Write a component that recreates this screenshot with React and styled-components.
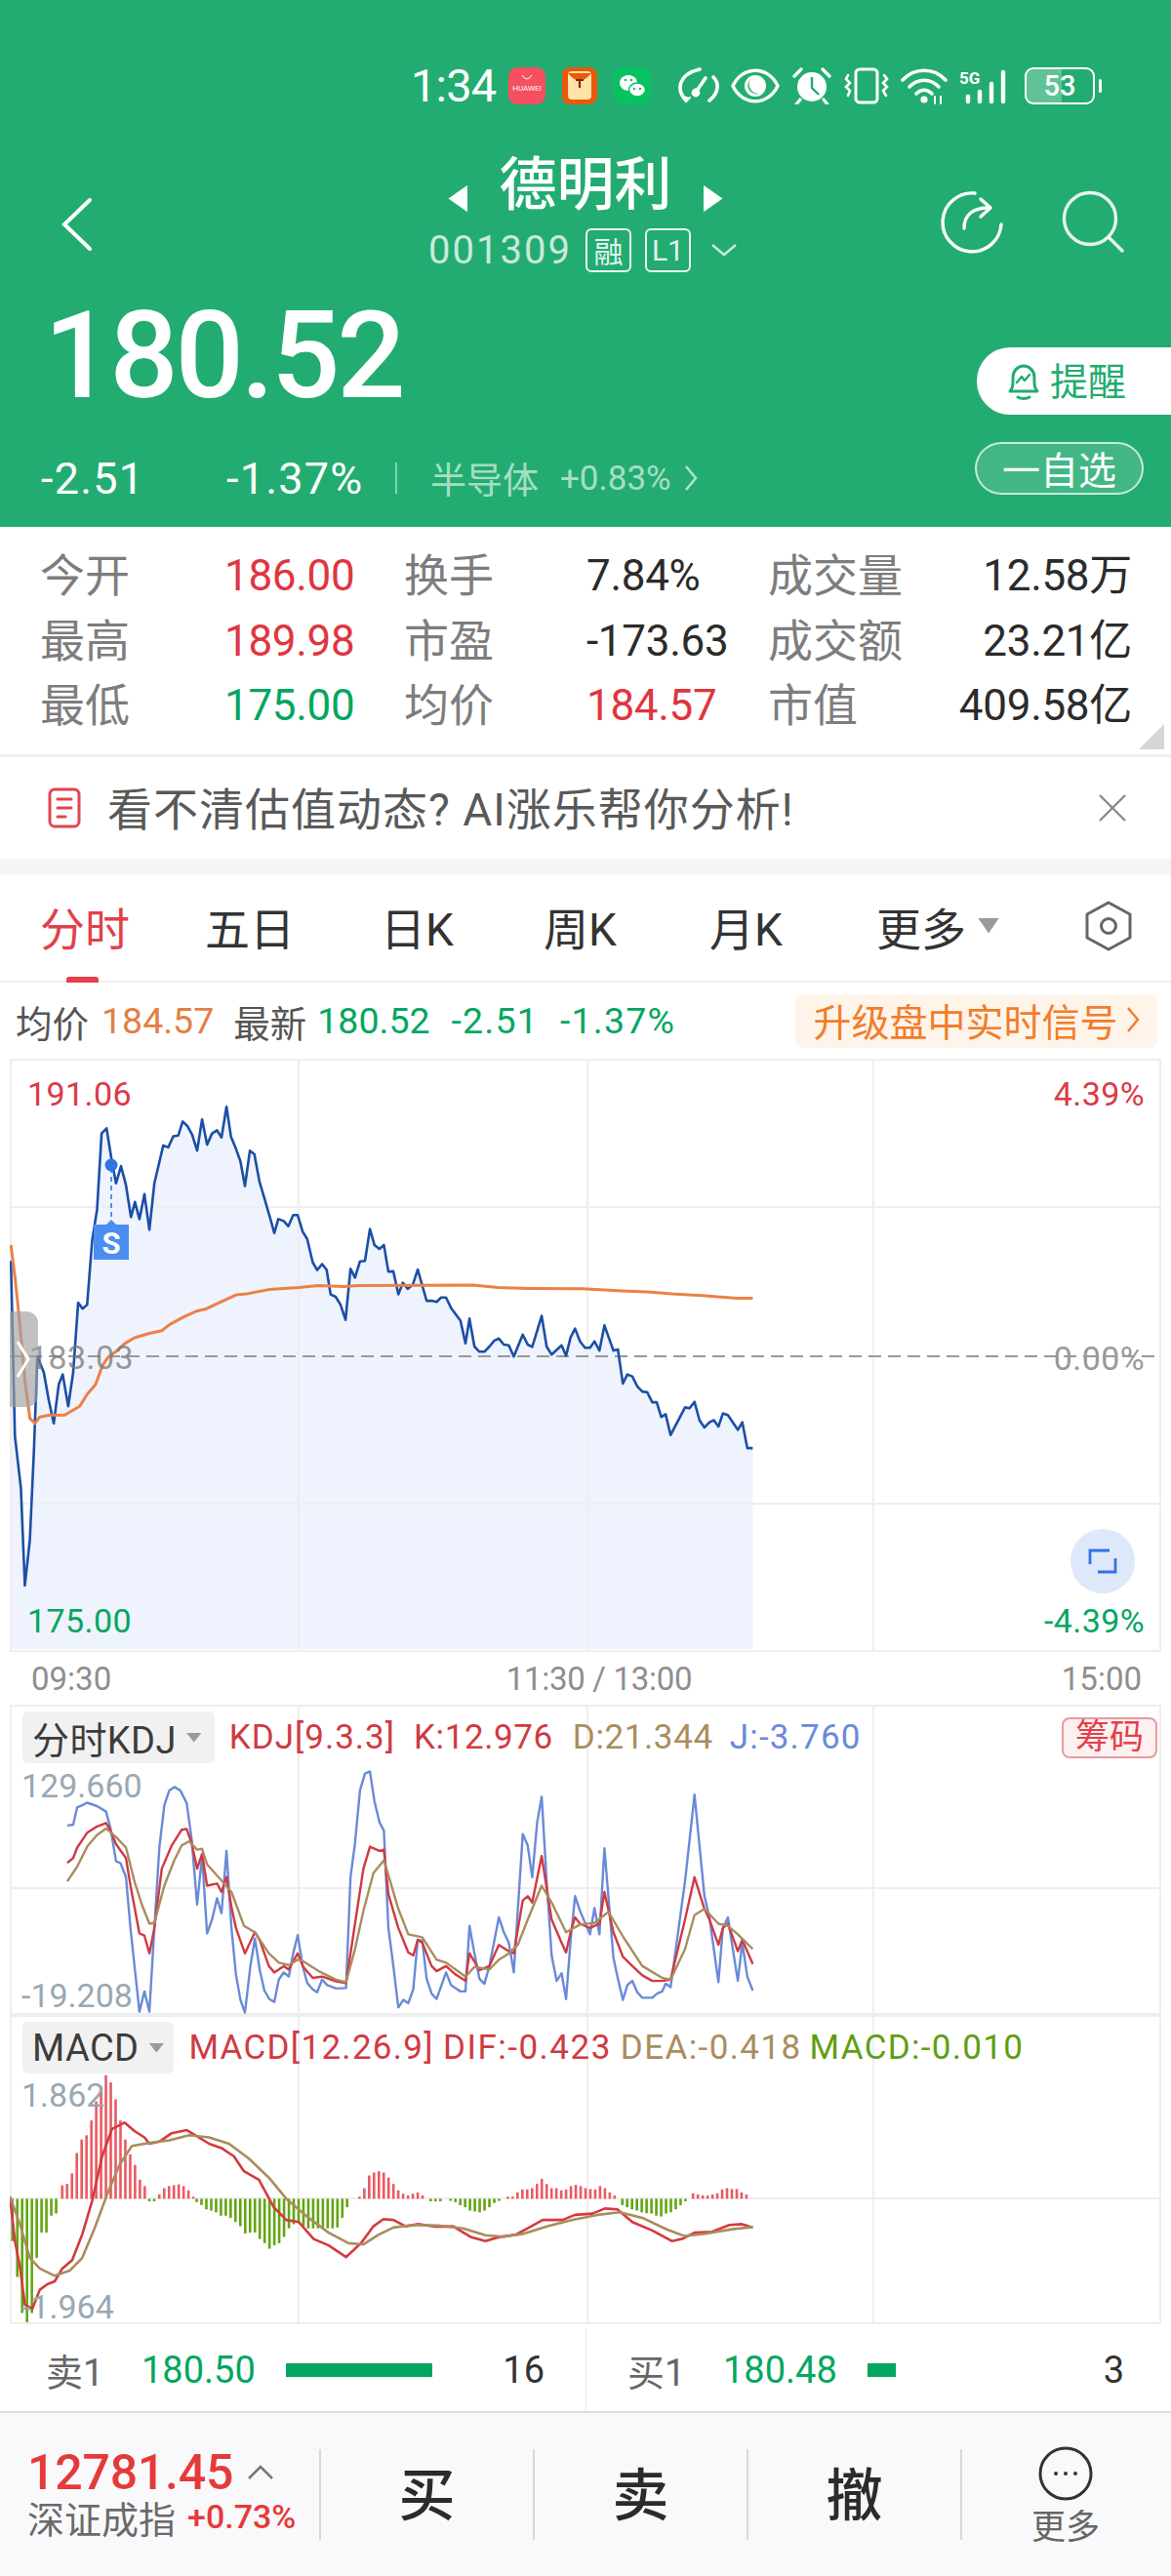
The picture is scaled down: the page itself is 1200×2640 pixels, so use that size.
import styled, { createGlobalStyle } from "styled-components";

const GREEN = "#23ac71";
const UP = "#e0353f";
const DOWN = "#04a65f";

const GlobalStyle = createGlobalStyle`
  html, body { margin: 0; padding: 0; background: #fff; }
  body { font-family: Roboto, "Noto Sans CJK SC", sans-serif; }
  * { box-sizing: border-box; }
`;

// traced from the chart, [x, y] in pixels of the zoomed crop
const PRICE = [[22,520],[30,960],[42,1090],[50,1335],[60,1220],[68,1000],[75,760],[88,800],[98,870],[108,928],[118,830],[126,805],[137,885],[147,800],[157,625],[166,640],[175,630],[185,470],[195,390],[204,200],[214,187],[224,265],[233,325],[243,282],[253,330],[263,410],[271,372],[280,415],[290,352],[300,442],[310,325],[328,230],[338,235],[348,207],[358,205],[367,170],[377,182],[386,203],[396,243],[406,165],[416,228],[426,200],[436,192],[445,210],[455,133],[464,208],[473,235],[483,270],[492,332],[502,243],[511,252],[521,320],[531,362],[541,405],[551,450],[559,415],[570,420],[579,433],[589,405],[598,405],[608,447],[617,465],[628,523],[637,543],[647,528],[656,542],[664,604],[674,610],[684,630],[694,668],[704,540],[713,562],[723,521],[733,520],[743,440],[752,480],[762,490],[771,480],[780,547],[790,546],[800,604],[809,575],[819,590],[829,580],[839,542],[857,620],[867,620],[877,623],[886,612],[896,612],[906,638],[925,670],[935,727],[943,665],[953,735],[963,748],[973,748],[983,735],[993,720],[1002,715],[1012,730],[1022,732],[1032,760],[1050,705],[1060,730],[1069,736],[1088,658],[1098,735],[1108,755],[1128,732],[1137,758],[1146,712],[1155,690],[1165,722],[1175,738],[1185,738],[1194,722],[1204,745],[1214,682],[1232,745],[1241,742],[1251,828],[1260,805],[1270,810],[1280,835],[1290,848],[1300,850],[1310,875],[1319,875],[1328,912],[1337,905],[1347,957],[1376,888],[1385,890],[1395,874],[1405,920],[1415,938],[1425,925],[1434,920],[1443,936],[1452,903],[1462,907],[1482,944],[1491,925],[1501,990],[1512,990]];
const AVG = [[22,480],[30,560],[40,680],[50,820],[60,915],[70,928],[80,912],[100,907],[130,907],[160,885],[175,855],[192,830],[205,785],[215,765],[235,745],[250,728],[270,713],[300,702],[325,695],[340,680],[370,660],[395,646],[415,640],[440,625],[475,605],[495,603],[540,592],[600,587],[640,582],[690,584],[720,582],[950,581],[1000,587],[1060,589],[1170,590],[1250,595],[1300,598],[1350,603],[1410,607],[1480,614],[1512,614]];
const KDJ_J = [[135,348],[147,346],[155,305],[165,300],[175,294],[195,302],[213,315],[222,355],[233,432],[242,437],[253,470],[262,590],[272,700],[280,788],[290,740],[300,788],[310,590],[320,400],[330,300],[340,265],[350,257],[362,265],[375,295],[385,380],[396,535],[406,420],[416,603],[426,570],[436,520],[445,555],[455,408],[465,590],[474,700],[483,760],[492,790],[503,680],[512,615],[522,690],[531,738],[541,758],[551,765],[560,712],[570,695],[580,705],[589,650],[598,607],[608,680],[617,720],[628,735],[637,742],[647,712],[657,725],[675,733],[695,732],[704,470],[713,390],[723,265],[733,225],[743,220],[752,290],[762,340],[771,360],[780,590],[790,680],[800,778],[810,760],[820,768],[830,735],[839,618],[848,620],[857,710],[867,745],[877,758],[896,695],[906,725],[925,740],[935,740],[943,585],[953,650],[963,710],[973,722],[983,680],[1002,565],[1012,600],[1022,625],[1032,695],[1050,368],[1060,395],[1069,470],[1079,340],[1088,280],[1098,480],[1108,655],[1118,715],[1128,697],[1137,758],[1146,620],[1155,515],[1165,550],[1185,605],[1194,543],[1204,605],[1214,402],[1232,660],[1241,710],[1251,760],[1260,725],[1270,715],[1280,742],[1290,755],[1310,755],[1320,745],[1330,740],[1337,722],[1347,730],[1376,480],[1395,275],[1415,515],[1425,565],[1443,718],[1452,590],[1462,565],[1482,715],[1491,625],[1501,705],[1512,738]];
const KDJ_K = [[135,436],[147,425],[155,400],[175,365],[195,350],[213,342],[222,360],[233,392],[253,425],[262,490],[280,603],[290,608],[300,650],[310,590],[325,450],[345,395],[365,358],[375,356],[385,390],[396,450],[406,415],[416,490],[436,485],[445,505],[455,470],[465,540],[474,590],[492,650],[512,600],[522,620],[540,680],[551,695],[570,680],[580,688],[598,650],[608,680],[628,708],[647,705],[675,716],[695,720],[713,580],[730,450],[743,398],[762,408],[771,405],[780,510],[800,590],[820,648],[830,655],[839,618],[848,625],[867,680],[877,692],[896,680],[915,700],[935,715],[943,650],[953,670],[963,690],[983,680],[1002,630],[1022,645],[1032,650],[1050,525],[1060,515],[1069,530],[1088,420],[1098,495],[1108,570],[1128,625],[1137,648],[1146,600],[1155,565],[1165,580],[1185,590],[1204,580],[1214,505],[1232,600],[1251,658],[1270,680],[1290,702],[1310,715],[1330,715],[1347,712],[1376,570],[1395,470],[1415,545],[1425,570],[1443,630],[1452,590],[1462,580],[1482,645],[1491,618],[1512,675]];
const KDJ_D = [[135,480],[155,445],[175,398],[195,370],[213,355],[233,375],[253,400],[270,480],[285,535],[300,580],[310,578],[330,490],[350,430],[365,395],[380,385],[396,405],[406,403],[416,440],[445,478],[465,505],[490,585],[512,600],[540,650],[560,672],[580,678],[598,665],[608,668],[640,692],[675,712],[695,718],[713,640],[730,550],[750,460],[771,430],[780,465],[800,545],[820,605],[848,612],[877,665],[896,672],[935,705],[953,682],[983,688],[1002,665],[1022,650],[1040,630],[1060,570],[1088,490],[1108,530],[1137,600],[1165,582],[1194,578],[1222,552],[1251,610],[1290,680],[1330,708],[1347,712],[1376,640],[1395,560],[1415,545],[1443,580],[1462,585],[1482,605],[1512,640]];
const DIF = [[20,1225],[30,1330],[40,1390],[50,1480],[65,1490],[80,1445],[95,1432],[110,1425],[125,1395],[145,1375],[165,1315],[185,1235],[205,1130],[225,1065],[250,1050],[270,1070],[290,1085],[300,1100],[320,1095],[345,1075],[375,1068],[395,1082],[420,1100],[445,1110],[470,1130],[490,1165],[520,1185],[550,1250],[575,1280],[600,1285],[630,1325],[660,1340],[695,1368],[725,1335],[750,1295],[770,1278],[790,1280],[815,1295],[840,1290],[875,1296],[910,1295],[945,1320],[975,1330],[1005,1320],[1035,1315],[1060,1300],[1090,1280],[1130,1280],[1155,1268],[1190,1265],[1215,1253],[1240,1255],[1270,1285],[1310,1305],[1350,1330],[1370,1325],[1395,1310],[1430,1308],[1465,1292],[1490,1290],[1512,1298]];
const DEA = [[20,1225],[40,1290],[60,1370],[80,1395],[110,1412],[140,1400],[165,1370],[190,1300],[215,1220],[240,1150],[265,1105],[300,1098],[340,1092],[380,1080],[420,1085],[460,1100],[500,1135],[540,1180],[575,1230],[620,1275],[660,1310],[700,1335],[730,1338],[760,1315],[790,1298],[830,1292],[880,1293],[930,1300],[975,1316],[1010,1320],[1050,1313],[1100,1295],[1150,1280],[1200,1268],[1245,1262],[1290,1275],[1340,1303],[1375,1318],[1420,1312],[1470,1302],[1512,1297]];

// histogram runs: first x, then the y each bar reaches
const HIST_RUNS = [
  [25, [1330,1415,1500,1522,1500,1370,1310,1310,1270,1265]],
  [125, [1198,1195,1170,1122,1090,1080,1045,1000,965,938,955,995,1045,1090,1125,1150,1185,1200]],
  [300, [1236,1236]],
  [320, [1220,1205,1200,1198,1196,1200,1210,1225]],
  [395, [1238,1245,1255,1258,1262,1270,1270,1275,1285,1295,1312,1310,1310,1325,1335,1348,1340,1335,1320,1300,1290,1285,1295,1300,1300,1300,1300,1300,1300,1298,1275,1250]],
  [722, [1225,1205,1175,1168,1165,1168,1180,1195,1210,1218,1222,1218,1215,1222]],
  [865, [1236,1236,1236]],
  [905, [1235,1238,1245,1250,1258,1260,1262,1258,1250,1240,1235]],
  [1020, [1225,1225,1215,1208,1208,1205,1195,1183,1195,1205,1205,1210,1208,1200,1197,1200,1205,1207,1208,1200,1205,1215,1222]],
  [1250, [1245,1250,1255,1258,1262,1264,1265,1270,1272,1265,1262,1255,1245,1236]],
  [1392, [1217,1220,1222,1222,1220,1217,1208,1205,1207,1207,1215,1220]],
];

const PANE_W = 1180;
const mapX = (x) => x / 1.96 - 10;
const mapPrice = (y) => y / 2.45 + 1080 - 1085;
const mapKdj = (y) => y / 2.306 + 1720 - 1747;
const mapMacd = (y) => y / 2.306 + 1720 - 2065;
const toPath = (pts, mapY) => pts.map(([x, y]) => `${mapX(x).toFixed(1)},${mapY(y).toFixed(1)}`).join(" ");

function Grid({ height, rows }) {
  return (
    <g stroke="#eeeeee" strokeWidth="2" fill="none">
      <rect x="1" y="1" width={PANE_W - 2} height={height - 2} />
      <line x1="296" x2="296" y1="0" y2={height} />
      <line x1="592" x2="592" y1="0" y2={height} />
      <line x1="885" x2="885" y1="0" y2={height} />
      {rows.map((y) => (
        <line key={y} x1="0" x2={PANE_W} y1={y} y2={y} />
      ))}
    </g>
  );
}

function PriceChart() {
  const line = toPath(PRICE, mapPrice);
  const area = `${mapX(22)},605 ${line} ${mapX(1512)},605`;
  return (
    <ChartSvg width={PANE_W} height={608}>
      <polygon points={area} fill="#eef3fd" />
      <Grid height={608} rows={[152, 456]} />
      <line x1="0" x2={PANE_W} y1="305" y2="305" stroke="#999" strokeWidth="2" strokeDasharray="13 7" />
      <polyline points={line} fill="none" stroke="#1b4fa6" strokeWidth="2.6" strokeLinejoin="round" />
      <polyline points={toPath(AVG, mapPrice)} fill="none" stroke="#ec8146" strokeWidth="3" strokeLinejoin="round" />
      <line x1="104" x2="104" y1="112" y2="167" stroke="#2d6fd2" strokeWidth="1.5" strokeDasharray="5 4" />
      <circle cx="104" cy="109" r="6.5" fill="#2f74e4" />
      <path d="M86 170 h13 l5 -5 l5 5 h13 v36 h-36 z" fill="#4b8df0" />
    </ChartSvg>
  );
}

function KdjChart() {
  return (
    <ChartSvg width={PANE_W} height={318}>
      <Grid height={318} rows={[188]} />
      <polyline points={toPath(KDJ_J, mapKdj)} fill="none" stroke="#6a8ad8" strokeWidth="2.4" strokeLinejoin="round" />
      <polyline points={toPath(KDJ_K, mapKdj)} fill="none" stroke="#cf3a42" strokeWidth="2.4" strokeLinejoin="round" />
      <polyline points={toPath(KDJ_D, mapKdj)} fill="none" stroke="#aa8c5e" strokeWidth="2.4" strokeLinejoin="round" />
    </ChartSvg>
  );
}

function MacdChart() {
  const zero = mapMacd(1230);
  const bars = [];
  HIST_RUNS.forEach(([first, tops]) => {
    tops.forEach((top, i) => {
      const x = mapX(first + i * 9.75);
      const y = mapMacd(top);
      bars.push(
        <line key={`${first}-${i}`} x1={x} x2={x} y1={zero} y2={y} stroke={top < 1230 ? "#ea5a62" : "#62a512"} strokeWidth="2.6" />
      );
    });
  });
  return (
    <ChartSvg width={PANE_W} height={317}>
      <Grid height={317} rows={[188]} />
      {bars}
      <polyline points={toPath(DIF, mapMacd)} fill="none" stroke="#d5393f" strokeWidth="2.6" strokeLinejoin="round" />
      <polyline points={toPath(DEA, mapMacd)} fill="none" stroke="#aa8c5e" strokeWidth="2.6" strokeLinejoin="round" />
    </ChartSvg>
  );
}

function HuaweiIcon() {
  return (
    <svg width="38" height="38" viewBox="0 0 38 38">
      <rect width="38" height="38" rx="9" fill="#f4505f" />
      <path d="M14 8 q5 8 10 0" fill="none" stroke="#fff" strokeWidth="1" />
      <text x="19" y="24" fill="#fff" fontSize="8" textAnchor="middle" fontFamily="Roboto, sans-serif">HUAWEI</text>
    </svg>
  );
}

function EnvelopeIcon() {
  return (
    <svg width="36" height="38" viewBox="0 0 36 38">
      <rect width="36" height="38" rx="8" fill="#e8590c" />
      <rect x="6" y="4" width="24" height="29" rx="4" fill="#ffe3a8" />
      <path d="M6 6 q12 15 24 0 z" fill="#e8590c" />
      <path d="M14 13 h8 M18 13 v8" stroke="#7c2d12" strokeWidth="2.2" />
    </svg>
  );
}

function WechatIcon() {
  return (
    <svg width="38" height="38" viewBox="0 0 38 38">
      <rect width="38" height="38" rx="9" fill="#08c160" />
      <ellipse cx="15" cy="16" rx="9" ry="8" fill="#fff" />
      <ellipse cx="24" cy="23" rx="8.5" ry="7" fill="#fff" stroke="#08c160" strokeWidth="1.5" />
      <circle cx="12" cy="13" r="1.3" fill="#08c160" />
      <circle cx="18" cy="13" r="1.3" fill="#08c160" />
      <circle cx="21" cy="22" r="1.2" fill="#08c160" />
      <circle cx="27" cy="22" r="1.2" fill="#08c160" />
    </svg>
  );
}

function SpeedIcon() {
  return (
    <svg width="44" height="38" viewBox="0 0 44 38" fill="none" stroke="#fff" strokeWidth="3.6" strokeLinecap="round">
      <path d="M10 34 C-1 22 3 7 24 2" />
      <path d="M34 34 C44 26 44 16 38 10" />
      <path d="M21 24 L30 11" />
      <circle cx="20" cy="26" r="2.6" fill="#fff" />
      <path d="M7 29 l3 6 l4 -4" fill="#fff" strokeWidth="2" />
    </svg>
  );
}

function EyeIcon() {
  return (
    <svg width="50" height="38" viewBox="0 0 50 38" fill="none">
      <path d="M2 19 C12 -2 38 -2 48 19 C38 40 12 40 2 19 Z" stroke="#fff" strokeWidth="3.4" />
      <circle cx="25" cy="19" r="11" fill="#fff" />
      <path d="M20 12 a10 10 0 0 0 9 15 a9 9 0 0 1 -9 -15" fill={GREEN} />
    </svg>
  );
}

function AlarmIcon() {
  return (
    <svg width="42" height="38" viewBox="0 0 42 38">
      <circle cx="21" cy="20" r="15" fill="#fff" />
      <path d="M21 10 v11 l7 7" fill="none" stroke={GREEN} strokeWidth="2.4" />
      <path d="M3 9 L10 2 M39 9 L32 2 M9 33 l-4 5 M33 33 l4 5" stroke="#fff" strokeWidth="3.2" strokeLinecap="round" />
    </svg>
  );
}

function VibrateIcon() {
  return (
    <svg width="46" height="38" viewBox="0 0 46 38" fill="none" stroke="#fff" strokeLinecap="round">
      <rect x="12" y="2" width="22" height="34" rx="4" strokeWidth="3" />
      <path d="M4 8 l-2 4 l4 4 l-4 4 l4 4 l-2 5" strokeWidth="2.6" />
      <path d="M41 8 l3 4 l-4 4 l4 4 l-4 4 l3 5" strokeWidth="2.6" />
    </svg>
  );
}

function WifiIcon() {
  return (
    <svg width="48" height="38" viewBox="0 0 48 38" fill="none" stroke="#fff" strokeWidth="3.6" strokeLinecap="round">
      <path d="M2 13 C14 0 34 0 46 13" />
      <path d="M9 20 C18 11 30 11 39 20" />
      <path d="M16 27 C21 22 27 22 32 27" />
      <circle cx="24" cy="33" r="3.6" fill="#fff" stroke="none" />
      <path d="M35 37 v-7 M41 30 v7" strokeWidth="2" />
    </svg>
  );
}

function SignalIcon() {
  return (
    <svg width="55" height="38" viewBox="0 0 55 38" fill="none" stroke="#fff" strokeWidth="4.4" strokeLinecap="round">
      <text x="0" y="17" fill="#fff" stroke="none" fontSize="17" fontWeight="700" fontFamily="Roboto, sans-serif">5G</text>
      <path d="M9 30 v5 M21 25 v10 M33 17 v18 M45 5 v30" />
    </svg>
  );
}

export default function App() {
  return (
    <Page>
      <GlobalStyle />
      <Header>
        <StatusBar>
          <Time>1:34</Time>
          <AppIcons>
            <HuaweiIcon />
            <EnvelopeIcon />
            <WechatIcon />
          </AppIcons>
          <SystemIcons>
            <SpeedIcon />
            <EyeIcon />
            <AlarmIcon />
            <VibrateIcon />
            <WifiIcon />
            <SignalIcon />
            <Battery>
              <BatteryBody>
                <BatteryFill />
                <BatteryText>53</BatteryText>
              </BatteryBody>
              <BatteryCap />
            </Battery>
          </SystemIcons>
        </StatusBar>

        <NavRow>
          <BackSlot>
            <svg width="34" height="56" viewBox="0 0 34 56" fill="none" stroke="#fff" strokeWidth="4" strokeLinecap="round">
              <path d="M30 3 L4 28 L30 53" />
            </svg>
          </BackSlot>
          <TitleBlock>
            <TitleRow>
              <Arrow $dir="left" />
              <StockName>德明利</StockName>
              <Arrow $dir="right" />
            </TitleRow>
            <CodeRow>
              <Code>001309</Code>
              <Badge>融</Badge>
              <Badge>L1</Badge>
              <CodeChevron width="28" height="14" viewBox="0 0 28 14" fill="none" stroke="rgba(255,255,255,0.75)" strokeWidth="2.5">
                <path d="M2 2 L14 12 L26 2" />
              </CodeChevron>
            </CodeRow>
          </TitleBlock>
          <NavIcons>
            <svg width="66" height="66" viewBox="0 0 66 66" fill="none" stroke="#fff" strokeWidth="3.4" strokeLinecap="round" strokeLinejoin="round">
              <path d="M36 4 A30 30 0 1 0 63 36" />
              <path d="M25 40 C25 26 34 19 50 19" />
              <path d="M42 10 L52 19 L42 28" />
            </svg>
            <svg width="66" height="66" viewBox="0 0 66 66" fill="none" stroke="rgba(255,255,255,0.88)" strokeWidth="3.4" strokeLinecap="round">
              <circle cx="30" cy="30" r="26.5" />
              <path d="M50 50 L63 63" />
            </svg>
          </NavIcons>
        </NavRow>

        <QuoteBlock>
          <QuoteLeft>
            <BigPrice>180.52</BigPrice>
            <ChangeRow>
              <Change $width={190}>-2.51</Change>
              <Change $width={173}>-1.37%</Change>
              <Divider />
              <Sector>半导体</Sector>
              <SectorPct>+0.83%</SectorPct>
              <svg width="16" height="30" viewBox="0 0 16 30" fill="none" stroke="rgba(255,255,255,0.65)" strokeWidth="2.5">
                <path d="M3 3 L13 15 L3 27" />
              </svg>
            </ChangeRow>
          </QuoteLeft>
          <QuoteRight>
            <RemindButton>
              <svg width="36" height="40" viewBox="0 0 36 40" fill="none" stroke={GREEN} strokeWidth="3" strokeLinecap="round" strokeLinejoin="round">
                <path d="M4 30 C8 26 7 20 7 16 C7 9 12 4 18 4 C24 4 29 9 29 16 C29 20 28 26 32 30 Z" />
                <path d="M12 36 C15 38 21 38 24 36" />
                <path d="M11 21 L16 15 L19 19 L24 13" strokeWidth="2.4" />
              </svg>
              <RemindText>提醒</RemindText>
            </RemindButton>
            <WatchButton>一自选</WatchButton>
          </QuoteRight>
        </QuoteBlock>
      </Header>

      <Stats>
        <StatLabel>今开</StatLabel><StatValue $color={UP}>186.00</StatValue>
        <StatLabel>换手</StatLabel><StatValue>7.84%</StatValue>
        <StatLabel>成交量</StatLabel><StatValue $end>12.58万</StatValue>
        <StatLabel>最高</StatLabel><StatValue $color={UP}>189.98</StatValue>
        <StatLabel>市盈</StatLabel><StatValue>-173.63</StatValue>
        <StatLabel>成交额</StatLabel><StatValue $end>23.21亿</StatValue>
        <StatLabel>最低</StatLabel><StatValue $color={DOWN}>175.00</StatValue>
        <StatLabel>均价</StatLabel><StatValue $color={UP}>184.57</StatValue>
        <StatLabel>市值</StatLabel><StatValue $end>409.58亿</StatValue>
        <CornerMark />
      </Stats>

      <Banner>
        <svg width="34" height="42" viewBox="0 0 34 42" fill="none" stroke="#e0454f" strokeWidth="3" strokeLinecap="round">
          <rect x="2" y="2" width="30" height="38" rx="5" />
          <path d="M10 12 H24 M10 21 H24 M10 30 H18" />
        </svg>
        <BannerText>看不清估值动态? AI涨乐帮你分析!</BannerText>
        <svg width="30" height="30" viewBox="0 0 30 30" stroke="#8a8a8a" strokeWidth="2.4">
          <path d="M2 2 L28 28 M28 2 L2 28" />
        </svg>
      </Banner>

      <Gap />

      <Tabs>
        <Tab $active>分时</Tab>
        <Tab>五日</Tab>
        <Tab>日K</Tab>
        <Tab>周K</Tab>
        <Tab>月K</Tab>
        <Tab>
          更多
          <TabCaret />
        </Tab>
        <svg width="48" height="52" viewBox="0 0 48 52" fill="none" stroke="#666" strokeWidth="3">
          <path d="M24 2 L46 14 V38 L24 50 L2 38 V14 Z" strokeLinejoin="round" />
          <circle cx="24" cy="26" r="7.5" />
        </svg>
        <TabUnderline />
      </Tabs>

      <QuoteLine>
        <QuoteText $color="#555">均价</QuoteText>
        <QuoteText $color="#e27f45" $gap={13}>184.57</QuoteText>
        <QuoteText $color="#555" $gap={20}>最新</QuoteText>
        <QuoteText $color={DOWN} $gap={11}>180.52</QuoteText>
        <QuoteText $color={DOWN} $gap={22} $spacing={1.2}>-2.51</QuoteText>
        <QuoteText $color={DOWN} $gap={22} $spacing={1.2}>-1.37%</QuoteText>
        <UpgradeButton>
          升级盘中实时信号
          <svg width="14" height="30" viewBox="0 0 14 30" fill="none" stroke="#f27d2a" strokeWidth="2.4">
            <path d="M2 3 L12 15 L2 27" />
          </svg>
        </UpgradeButton>
      </QuoteLine>

      <PricePane>
        <PriceChart />
        <SignalLetter>S</SignalLetter>
        <ChartLabel $left={18} $top={18} $color="#dc3a47">191.06</ChartLabel>
        <ChartLabel $left={20} $top={288} $color="rgba(120,120,120,0.75)">183.03</ChartLabel>
        <ChartLabel $left={18} $top={558} $color={DOWN}>175.00</ChartLabel>
        <ChartLabel $right={17} $top={18} $color="#dc3a47">4.39%</ChartLabel>
        <ChartLabel $right={17} $top={289} $color="#999">0.00%</ChartLabel>
        <ChartLabel $right={17} $top={558} $color={DOWN}>-4.39%</ChartLabel>
        <SideHandle>
          <svg width="16" height="40" viewBox="0 0 16 40" fill="none" stroke="#fff" strokeWidth="3">
            <path d="M2 2 L13 20 L2 38" />
          </svg>
        </SideHandle>
        <ExpandButton>
          <svg width="30" height="26" viewBox="0 0 30 26" fill="none" stroke="#3273e6" strokeWidth="2.8">
            <path d="M2 16 V2 H22 M28 10 V24 H10" />
          </svg>
        </ExpandButton>
      </PricePane>

      <TimeAxis>
        <span>09:30</span>
        <span>11:30 / 13:00</span>
        <span>15:00</span>
      </TimeAxis>

      <SubPane $height={318}>
        <KdjChart />
        <PaneHead>
          <PaneSelect>分时KDJ<SelectCaret /></PaneSelect>
          <Indicator $color="#d03a42" $spacing={1}>KDJ[9.3.3]</Indicator>
          <Indicator $color="#d03a42" $gap={19} $spacing={0.6}>K:12.976</Indicator>
          <Indicator $color="#aa8c5e" $gap={20} $spacing={0.6}>D:21.344</Indicator>
          <Indicator $color="#6a8ad8" $gap={17} $spacing={1.2}>J:-3.760</Indicator>
          <ChipButton>筹码</ChipButton>
        </PaneHead>
        <AxisLabel $top={65}>129.660</AxisLabel>
        <AxisLabel $top={280}>-19.208</AxisLabel>
      </SubPane>

      <SubPane $height={317}>
        <MacdChart />
        <PaneHead>
          <PaneSelect $pad={10}>MACD<SelectCaret /></PaneSelect>
          <Indicator $color="#d03a42" $spacing={1.3}>MACD[12.26.9]</Indicator>
          <Indicator $color="#d03a42" $gap={9} $spacing={1.5}>DIF:-0.423</Indicator>
          <Indicator $color="#aa8c5e" $gap={9} $spacing={1.4}>DEA:-0.418</Indicator>
          <Indicator $color="#5f9e12" $gap={8} $spacing={1.3}>MACD:-0.010</Indicator>
        </PaneHead>
        <AxisLabel $top={64}>1.862</AxisLabel>
        <AxisLabel $top={281}>-1.964</AxisLabel>
      </SubPane>

      <OrderRow>
        <OrderSide>
          <OrderLabel>卖1</OrderLabel>
          <OrderPrice>180.50</OrderPrice>
          <OrderBar $width={150} />
          <OrderQty>16</OrderQty>
        </OrderSide>
        <OrderSide $second>
          <OrderLabel>买1</OrderLabel>
          <OrderPrice>180.48</OrderPrice>
          <OrderBar $width={29} />
          <OrderQty>3</OrderQty>
        </OrderSide>
      </OrderRow>

      <BottomBar>
        <IndexCell>
          <IndexTop>
            <IndexValue>12781.45</IndexValue>
            <svg width="28" height="16" viewBox="0 0 28 16" fill="none" stroke="#777" strokeWidth="2.6">
              <path d="M2 14 L14 2 L26 14" />
            </svg>
          </IndexTop>
          <IndexBottom>
            <IndexName>深证成指</IndexName>
            <IndexPct>+0.73%</IndexPct>
          </IndexBottom>
        </IndexCell>
        <TradeCell>买</TradeCell>
        <TradeCell>卖</TradeCell>
        <TradeCell>撤</TradeCell>
        <MoreCell>
          <svg width="56" height="56" viewBox="0 0 56 56" fill="none" stroke="#333" strokeWidth="3">
            <circle cx="28" cy="28" r="26" />
            <circle cx="18" cy="28" r="2" fill="#333" stroke="none" />
            <circle cx="28" cy="28" r="2" fill="#333" stroke="none" />
            <circle cx="38" cy="28" r="2" fill="#333" stroke="none" />
          </svg>
          <MoreText>更多</MoreText>
        </MoreCell>
      </BottomBar>
    </Page>
  );
}

const Page = styled.div`
  width: 1200px;
  height: 2640px;
  overflow: hidden;
  background: #fff;
  display: flex;
  flex-direction: column;
`;

const Header = styled.header`
  height: 540px;
  background: ${GREEN};
  color: #fff;
  display: flex;
  flex-direction: column;
`;

const StatusBar = styled.div`
  height: 118px;
  padding: 69px 0 0 421px;
  display: flex;
  align-items: flex-start;
`;

const Time = styled.div`
  width: 100px;
  font-size: 47px;
  line-height: 38px;
  letter-spacing: -0.8px;
`;

const AppIcons = styled.div`
  display: flex;
  gap: 17px;
`;

const SystemIcons = styled.div`
  margin-left: 26px;
  display: flex;
  gap: 12px;
`;

const Battery = styled.div`
  display: flex;
  align-items: center;
  gap: 4px;
`;

const BatteryBody = styled.div`
  position: relative;
  width: 72px;
  height: 38px;
  border: 2.5px solid #fff;
  border-radius: 9px;
  overflow: hidden;
  display: flex;
  align-items: center;
  justify-content: center;
`;

const BatteryFill = styled.div`
  position: absolute;
  left: 0;
  top: 0;
  bottom: 0;
  width: 53%;
  background: rgba(255, 255, 255, 0.28);
`;

const BatteryText = styled.span`
  position: relative;
  font-size: 29px;
  line-height: 30px;
  font-weight: 500;
`;

const BatteryCap = styled.div`
  width: 3px;
  height: 14px;
  background: #fff;
  border-radius: 2px;
`;

const NavRow = styled.div`
  height: 167px;
  padding-top: 34px;
  display: grid;
  grid-template-columns: 1fr auto 1fr;
`;

const BackSlot = styled.div`
  padding: 50px 0 0 62px;
`;

const TitleBlock = styled.div`
  display: flex;
  flex-direction: column;
  align-items: center;
`;

const TitleRow = styled.div`
  height: 76px;
  display: flex;
  align-items: center;
  gap: 32px;
`;

const Arrow = styled.div`
  width: 20px;
  height: 28px;
  margin-top: 27px;
  background: #fff;
  clip-path: ${(p) => (p.$dir === "left" ? "polygon(100% 0, 100% 100%, 0 50%)" : "polygon(0 0, 100% 50%, 0 100%)")};
`;

const StockName = styled.div`
  font-size: 59px;
  line-height: 76px;
  font-weight: 500;
`;

const CodeRow = styled.div`
  display: flex;
  align-items: center;
  height: 46px;
  margin: 5px 0 0 -5px;
  gap: 14px;
`;

const Code = styled.span`
  font-size: 40px;
  letter-spacing: 2px;
  color: rgba(255, 255, 255, 0.75);
`;

const Badge = styled.span`
  width: 47px;
  height: 45px;
  border: 2px solid rgba(255, 255, 255, 0.9);
  border-radius: 6px;
  display: flex;
  align-items: center;
  justify-content: center;
  font-size: 30px;
  color: rgba(255, 255, 255, 0.9);
`;

const CodeChevron = styled.svg`
  margin-left: 6px;
`;

const NavIcons = styled.div`
  padding: 42px 47px 0 0;
  display: flex;
  justify-content: flex-end;
  align-items: flex-start;
  gap: 58px;
`;

const QuoteBlock = styled.div`
  flex: 1;
  display: flex;
  justify-content: space-between;
`;

const QuoteLeft = styled.div`
  padding: 30px 0 0 42px;
`;

const BigPrice = styled.div`
  font-size: 124px;
  line-height: 100px;
  font-weight: 500;
  letter-spacing: -3.2px;
  margin-left: 3px;
`;

const ChangeRow = styled.div`
  margin-top: 55px;
  height: 40px;
  display: flex;
  align-items: center;
`;

const Change = styled.span`
  width: ${(p) => p.$width}px;
  font-size: 45px;
  letter-spacing: 1.2px;
`;

const Divider = styled.span`
  width: 2px;
  height: 32px;
  background: rgba(255, 255, 255, 0.45);
  margin-right: 34px;
`;

const Sector = styled.span`
  font-size: 37px;
  color: rgba(255, 255, 255, 0.62);
`;

const SectorPct = styled.span`
  margin: 0 12px 0 22px;
  font-size: 35px;
  color: rgba(255, 255, 255, 0.62);
`;

const QuoteRight = styled.div`
  padding-top: 71px;
  width: 201px;
  display: flex;
  flex-direction: column;
  gap: 28px;
`;

const RemindButton = styled.div`
  height: 69px;
  margin-left: 2px;
  padding-left: 30px;
  background: #fff;
  border-radius: 34px 0 0 34px;
  color: ${GREEN};
  font-size: 39px;
  display: flex;
  align-items: center;
  gap: 9px;
`;

const RemindText = styled.span`
  margin-top: -5px;
`;

const WatchButton = styled.div`
  width: 173px;
  height: 54px;
  padding-bottom: 3px;
  border: 2px solid rgba(255, 255, 255, 0.7);
  border-radius: 27px;
  background: rgba(255, 255, 255, 0.14);
  font-size: 39px;
  display: flex;
  align-items: center;
  justify-content: center;
`;

const Stats = styled.section`
  position: relative;
  height: 236px;
  padding: 17px 40px 0 41px;
  border-bottom: 3px solid #eeeeee;
  display: grid;
  grid-template-columns: 189px 184px 187px 186px auto 1fr;
  grid-auto-rows: 66.5px;
  align-items: center;
`;

const StatLabel = styled.span`
  font-size: 46px;
  line-height: 1;
  color: #7d7d7d;
`;

const StatValue = styled.span`
  font-size: 44px;
  line-height: 1;
  letter-spacing: -0.3px;
  color: ${(p) => p.$color || "#2b2b2b"};
  justify-self: ${(p) => (p.$end ? "end" : "start")};
`;

const CornerMark = styled.div`
  position: absolute;
  right: 7px;
  bottom: 5px;
  width: 26px;
  height: 26px;
  background: #d6d6d6;
  clip-path: polygon(100% 0, 100% 100%, 0 100%);
`;

const Banner = styled.section`
  height: 104px;
  padding: 0 45px 0 49px;
  display: flex;
  align-items: center;
`;

const BannerText = styled.div`
  flex: 1;
  margin: -4px 0 0 27px;
  font-size: 46px;
  letter-spacing: 1px;
  color: #595959;
`;

const Gap = styled.div`
  height: 17px;
  background: #f5f5f5;
`;

const Tabs = styled.nav`
  position: relative;
  height: 110px;
  padding: 0 0 5px 41px;
  border-bottom: 2px solid #eeeeee;
  display: grid;
  grid-template-columns: 169px 180px 167px 170px 171px 214px auto;
  align-items: center;
`;

const Tab = styled.div`
  font-size: 46px;
  color: ${(p) => (p.$active ? "#e2404a" : "#333")};
  display: flex;
  align-items: center;
`;

const TabCaret = styled.span`
  width: 22px;
  height: 16px;
  margin-left: 12px;
  background: #9a9a9a;
  clip-path: polygon(0 0, 100% 0, 50% 100%);
`;

const TabUnderline = styled.div`
  position: absolute;
  left: 68px;
  bottom: -2px;
  width: 33px;
  height: 6px;
  background: #e2404a;
  border-radius: 3px 3px 0 0;
`;

const QuoteLine = styled.div`
  height: 78px;
  padding: 0 14px 0 16px;
  display: flex;
  align-items: center;
`;

const QuoteText = styled.span`
  margin-left: ${(p) => p.$gap || 0}px;
  font-size: 37.5px;
  letter-spacing: ${(p) => p.$spacing || 0}px;
  color: ${(p) => p.$color};
`;

const UpgradeButton = styled.div`
  margin-left: auto;
  width: 371px;
  height: 55px;
  padding-bottom: 3px;
  background: #fff4ea;
  border-radius: 8px;
  color: #f27d2a;
  font-size: 39px;
  display: flex;
  align-items: center;
  justify-content: center;
  gap: 8px;
`;

const ChartSvg = styled.svg`
  position: absolute;
  left: 0;
  top: 0;
`;

const PricePane = styled.div`
  position: relative;
  flex: none;
  width: ${PANE_W}px;
  height: 608px;
  margin-left: 10px;
`;

const ChartLabel = styled.span`
  position: absolute;
  ${(p) => (p.$left !== undefined ? `left: ${p.$left}px;` : `right: ${p.$right}px;`)}
  top: ${(p) => p.$top}px;
  font-size: 34px;
  line-height: 36px;
  letter-spacing: 0.4px;
  color: ${(p) => p.$color};
`;

const SignalLetter = styled.span`
  position: absolute;
  left: 86px;
  top: 173px;
  width: 36px;
  text-align: center;
  color: #fff;
  font-size: 31px;
  line-height: 34px;
  font-weight: 700;
`;

const SideHandle = styled.div`
  position: absolute;
  left: 0;
  top: 259px;
  width: 29px;
  height: 98px;
  background: rgba(160, 160, 160, 0.65);
  border-radius: 0 12px 12px 0;
  display: flex;
  align-items: center;
  padding-left: 6px;
`;

const ExpandButton = styled.div`
  position: absolute;
  left: 1087px;
  top: 482px;
  width: 66px;
  height: 66px;
  border-radius: 50%;
  background: #dde8fb;
  display: flex;
  align-items: center;
  justify-content: center;
`;

const TimeAxis = styled.div`
  height: 54px;
  padding: 0 30px 0 32px;
  display: flex;
  align-items: center;
  justify-content: space-between;
  font-size: 33px;
  color: #8e8e8e;
  span:nth-child(2) {
    margin-left: 26px;
    letter-spacing: -0.3px;
  }
`;

const SubPane = styled.div`
  position: relative;
  flex: none;
  width: ${PANE_W}px;
  height: ${(p) => p.$height}px;
  margin-left: 10px;
`;

const PaneHead = styled.div`
  position: relative;
  height: 53px;
  margin: 7px 4px 0 13px;
  display: flex;
  align-items: center;
`;

const PaneSelect = styled.div`
  height: 53px;
  padding: 0 ${(p) => p.$pad || 13}px 0 10px;
  margin-right: 15px;
  background: #f1f1f1;
  border-radius: 6px;
  color: #3c3c3c;
  font-size: 38px;
  letter-spacing: 0.4px;
  display: flex;
  align-items: center;
  gap: 10px;
`;

const SelectCaret = styled.span`
  width: 16px;
  height: 10px;
  background: #9a9a9a;
  clip-path: polygon(0 0, 100% 0, 50% 100%);
`;

const Indicator = styled.span`
  margin-left: ${(p) => p.$gap || 0}px;
  font-size: 35px;
  letter-spacing: ${(p) => p.$spacing || 0}px;
  color: ${(p) => p.$color};
  white-space: nowrap;
`;

const ChipButton = styled.div`
  margin-left: auto;
  width: 98px;
  height: 42px;
  border: 2px solid #e99aa0;
  border-radius: 8px;
  background: #fdf0f0;
  color: #e2404a;
  font-size: 35px;
  line-height: 38px;
  display: flex;
  align-items: center;
  justify-content: center;
`;

const AxisLabel = styled.span`
  position: absolute;
  left: 12px;
  top: ${(p) => p.$top}px;
  font-size: 34px;
  line-height: 36px;
  color: #98a8b5;
`;

const OrderRow = styled.section`
  flex: none;
  height: 91px;
  padding-top: 4px;
  border-bottom: 2px solid #dedede;
  display: grid;
  grid-template-columns: 600px 600px;
`;

const OrderSide = styled.div`
  padding: 0 ${(p) => (p.$second ? "48px" : "42px")} 0 ${(p) => (p.$second ? "42px" : "47px")};
  border-left: ${(p) => (p.$second ? "1px solid #ececec" : "none")};
  display: flex;
  align-items: center;
`;

const OrderLabel = styled.span`
  width: 98px;
  font-size: 38px;
  color: #666;
`;

const OrderPrice = styled.span`
  width: 148px;
  font-size: 38px;
  color: ${DOWN};
`;

const OrderBar = styled.span`
  width: ${(p) => p.$width}px;
  height: 14px;
  background: ${DOWN};
`;

const OrderQty = styled.span`
  margin-left: auto;
  font-size: 38px;
  color: #333;
`;

const BottomBar = styled.footer`
  flex: 1;
  padding-top: 37px;
  background: #f9f9fb;
  display: grid;
  grid-template-columns: 327px 219px 219px 219px 1fr;
  align-items: start;
`;

const IndexCell = styled.div`
  height: 93px;
  padding-left: 28px;
  display: flex;
  flex-direction: column;
`;

const IndexTop = styled.div`
  height: 48px;
  display: flex;
  align-items: center;
  gap: 14px;
`;

const IndexValue = styled.span`
  font-size: 50px;
  font-weight: 500;
  letter-spacing: -0.2px;
  color: #e53a3a;
`;

const IndexBottom = styled.div`
  height: 42px;
  display: flex;
  align-items: center;
  gap: 12px;
`;

const IndexName = styled.span`
  font-size: 38px;
  color: #6a6a6a;
`;

const IndexPct = styled.span`
  font-size: 34px;
  font-weight: 500;
  color: #e53a3a;
`;

const TradeCell = styled.div`
  height: 93px;
  padding-bottom: 7px;
  border-left: 2px solid #d8d8d8;
  color: #2b2b2b;
  font-size: 58px;
  font-weight: 500;
  display: flex;
  align-items: center;
  justify-content: center;
`;

const MoreCell = styled.div`
  height: 110px;
  margin-top: -3px;
  display: flex;
  flex-direction: column;
  align-items: center;
  position: relative;
  &::before {
    content: "";
    position: absolute;
    left: 0;
    top: 3px;
    width: 2px;
    height: 93px;
    background: #d8d8d8;
  }
`;

const MoreText = styled.span`
  font-size: 35px;
  line-height: 42px;
  margin-top: 7px;
  color: #666;
`;
